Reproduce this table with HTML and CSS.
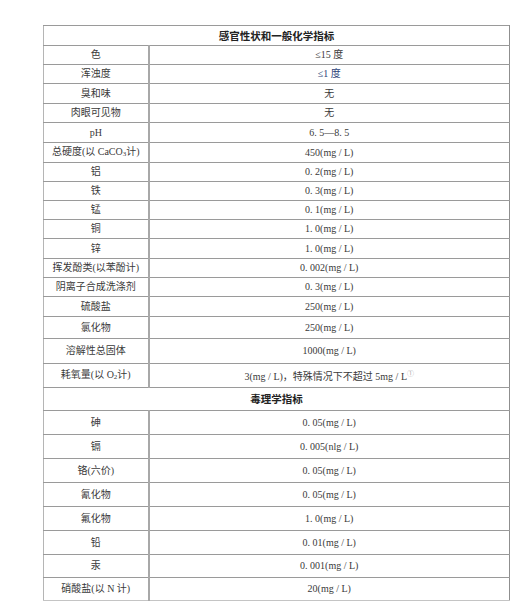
FILE: index.html
```html
<!DOCTYPE html>
<html lang="zh">
<head>
<meta charset="utf-8">
<link rel="stylesheet" href="styles.css">
</head>
<body>
<table class="std">
  <colgroup><col class="c1"><col class="c2"></colgroup>
  <tr class="h20"><th colspan="2">感官性状和一般化学指标</th></tr>
  <tr class="h19"><td>色</td><td>≤15 度</td></tr>
  <tr class="h19"><td>浑浊度</td><td class="blue">≤1 度</td></tr>
  <tr class="h20"><td>臭和味</td><td>无</td></tr>
  <tr class="h19"><td>肉眼可见物</td><td>无</td></tr>
  <tr class="h20"><td>pH</td><td>6. 5—8. 5</td></tr>
  <tr class="h20"><td>总硬度(以 CaCO<sub>3</sub>计)</td><td>450(mg / L)</td></tr>
  <tr class="h19"><td>铝</td><td>0. 2(mg / L)</td></tr>
  <tr class="h19"><td>铁</td><td>0. 3(mg / L)</td></tr>
  <tr class="h19"><td>锰</td><td>0. 1(mg / L)</td></tr>
  <tr class="h19"><td>铜</td><td>1. 0(mg / L)</td></tr>
  <tr class="h20"><td>锌</td><td>1. 0(mg / L)</td></tr>
  <tr class="h19"><td>挥发酚类(以苯酚计)</td><td>0. 002(mg / L)</td></tr>
  <tr class="h19"><td>阴离子合成洗涤剂</td><td>0. 3(mg / L)</td></tr>
  <tr class="h20"><td>硫酸盐</td><td>250(mg / L)</td></tr>
  <tr class="h22"><td>氯化物</td><td>250(mg / L)</td></tr>
  <tr class="h25"><td>溶解性总固体</td><td>1000(mg / L)</td></tr>
  <tr class="h24"><td>耗氧量(以 O<sub>2</sub>计)</td><td>3(mg / L)，特殊情况下不超过 5mg / L<sup>①</sup></td></tr>
  <tr class="h23"><th colspan="2">毒理学指标</th></tr>
  <tr class="h24"><td>砷</td><td>0. 05(mg / L)</td></tr>
  <tr class="h24"><td>镉</td><td>0. 005(nlg / L)</td></tr>
  <tr class="h24"><td>铬(六价)</td><td>0. 05(mg / L)</td></tr>
  <tr class="h24"><td>氰化物</td><td>0. 05(mg / L)</td></tr>
  <tr class="h24"><td>氟化物</td><td>1. 0(mg / L)</td></tr>
  <tr class="h24"><td>铅</td><td>0. 01(mg / L)</td></tr>
  <tr class="h23"><td>汞</td><td>0. 001(mg / L)</td></tr>
  <tr class="h23"><td>硝酸盐(以 N 计)</td><td>20(mg / L)</td></tr>
</table>
</body>
</html>
```

FILE: styles.css
```css
html, body {
  margin: 0;
  padding: 0;
  background: #fff;
}
body {
  padding: 25px 0 0 43px;
  font-family: "Liberation Serif", "Noto Sans CJK SC", serif;
  font-size: 10px;
  color: #3a3a3a;
}
.std {
  border-collapse: collapse;
  width: 467px;
  table-layout: fixed;
}
.c1 { width: 105px; }
.std td, .std th {
  padding: 0;
  text-align: center;
  vertical-align: middle;
  border-top: 1px solid #9a9a9a;
  border-bottom: 1px solid #9a9a9a;
  border-left: 1px solid #b5b5b5;
  border-right: 1px solid #8f8f8f;
  line-height: 12px;
  white-space: nowrap;
}
.std td:first-child {
  border-right: 2px solid #a8a8a8;
}
.std th {
  font-family: "Noto Sans CJK SC", sans-serif;
  font-weight: bold;
  font-size: 10.5px;
  color: #222;
}
.std tr:last-child td {
  border-bottom: 1px solid #c4c4c4;
}
.h19 { height: 19px; }
.h20 { height: 20px; }
.h22 { height: 22px; }
.h23 { height: 23px; }
.h24 { height: 24px; }
.h25 { height: 25px; }
.blue { color: #2b3f78; }
sub {
  font-size: 7px;
  vertical-align: -1px;
}
sup {
  font-size: 7px;
  color: #aaa;
  vertical-align: 4px;
}
```
